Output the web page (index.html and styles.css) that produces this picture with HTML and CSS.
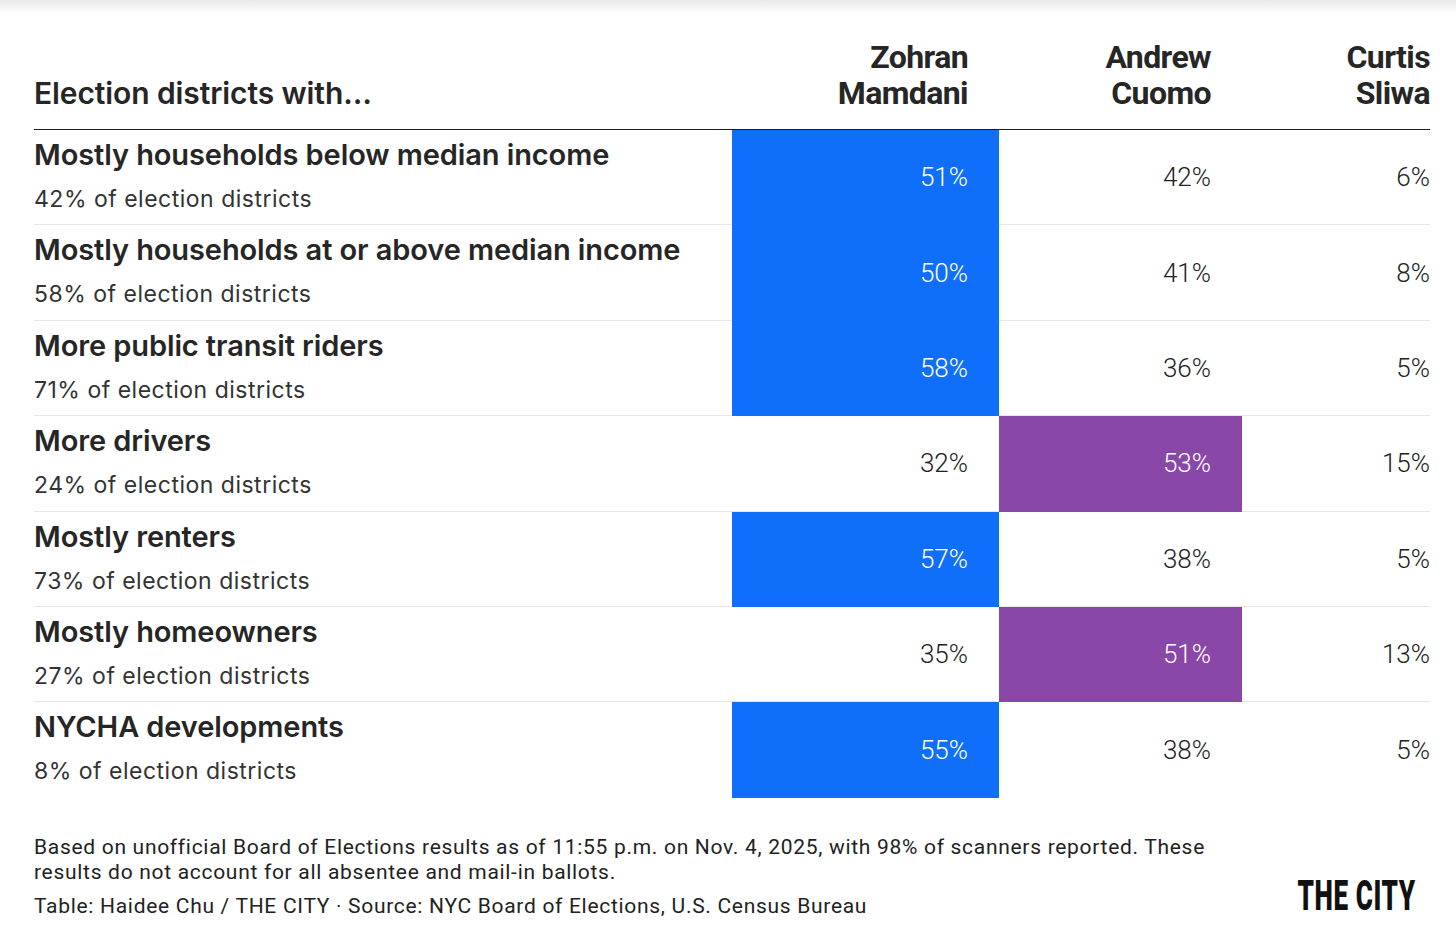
FILE: index.html
```html
<!DOCTYPE html>
<html lang="en">
<head>
<meta charset="utf-8">
<title>Election districts</title>
<link rel="stylesheet" href="styles.css">
</head>
<body>
<div class="shade"></div>
<main class="wrap">
  <div class="table">
    <div class="head">
      <div class="hcell hlabel">Election districts with…</div>
      <div class="hcell hnum pad">Zohran<br>Mamdani</div>
      <div class="hcell hnum pad">Andrew<br>Cuomo</div>
      <div class="hcell hnum">Curtis<br>Sliwa</div>
    </div>

    <div class="row">
      <div class="cell label"><div class="title">Mostly households below median income</div><div class="sub">42% of election districts</div></div>
      <div class="cell num pad blue">51%</div>
      <div class="cell num pad">42%</div>
      <div class="cell num">6%</div>
    </div>
    <div class="row">
      <div class="cell label"><div class="title">Mostly households at or above median income</div><div class="sub">58% of election districts</div></div>
      <div class="cell num pad blue">50%</div>
      <div class="cell num pad">41%</div>
      <div class="cell num">8%</div>
    </div>
    <div class="row">
      <div class="cell label"><div class="title">More public transit riders</div><div class="sub">71% of election districts</div></div>
      <div class="cell num pad blue">58%</div>
      <div class="cell num pad">36%</div>
      <div class="cell num">5%</div>
    </div>
    <div class="row">
      <div class="cell label"><div class="title">More drivers</div><div class="sub">24% of election districts</div></div>
      <div class="cell num pad">32%</div>
      <div class="cell num pad purple">53%</div>
      <div class="cell num">15%</div>
    </div>
    <div class="row">
      <div class="cell label"><div class="title">Mostly renters</div><div class="sub">73% of election districts</div></div>
      <div class="cell num pad blue">57%</div>
      <div class="cell num pad">38%</div>
      <div class="cell num">5%</div>
    </div>
    <div class="row">
      <div class="cell label"><div class="title">Mostly homeowners</div><div class="sub">27% of election districts</div></div>
      <div class="cell num pad">35%</div>
      <div class="cell num pad purple">51%</div>
      <div class="cell num">13%</div>
    </div>
    <div class="row last">
      <div class="cell label"><div class="title">NYCHA developments</div><div class="sub">8% of election districts</div></div>
      <div class="cell num pad blue">55%</div>
      <div class="cell num pad">38%</div>
      <div class="cell num">5%</div>
    </div>
  </div>

  <footer class="foot">
    <div class="notes">
      <p class="note">Based on unofficial Board of Elections results as of 11:55 p.m. on Nov. 4, 2025, with 98% of scanners reported. These results do not account for all absentee and mail-in ballots.</p>
      <p class="credit">Table: Haidee Chu / THE CITY · Source: NYC Board of Elections, U.S. Census Bureau</p>
    </div>
    <div class="logo">THE CITY</div>
  </footer>
</main>
</body>
</html>
```

FILE: styles.css
```css
html, body {
  margin: 0;
  padding: 0;
  background: #ffffff;
}
body {
  width: 1456px;
  height: 944px;
  overflow: hidden;
  position: relative;
  font-family: "Inter", "Noto Sans", sans-serif;
  color: #222222;
}
.shade {
  position: absolute;
  left: 0;
  top: 0;
  width: 100%;
  height: 14px;
  background: linear-gradient(#e9e9e9, rgba(255,255,255,0));
}
.wrap {
  padding: 0 26px 0 34px;
}
.table {
  width: 1396px;
}
.head, .row {
  display: grid;
  grid-template-columns: 698px 267px 243px 188px;
}
.head {
  height: 130px;
  border-bottom: 1.5px solid #1e1e1e;
  box-sizing: border-box;
  align-items: end;
}
.hcell {
  padding-bottom: 18px;
  line-height: 36px;
  color: #262626;
}
.hlabel {
  font-size: 30px;
  font-weight: 600;
  letter-spacing: -0.1px;
}
.hnum {
  text-align: right;
  font-family: "Roboto", "Liberation Sans", sans-serif;
  font-size: 32px;
  font-weight: 700;
  letter-spacing: -0.6px;
}
.pad {
  padding-right: 31px;
}
.row {
  height: 95.4px;
}
.cell {
  border-bottom: 1px solid #e7e7e7;
  box-sizing: border-box;
}
.row.last .cell {
  border-bottom-color: transparent;
}
.label {
  padding-top: 9px;
}
.title {
  font-size: 29px;
  line-height: 32px;
  font-weight: 600;
  color: #262626;
  letter-spacing: -0.1px;
}
.sub {
  margin-top: 15px;
  font-size: 23px;
  line-height: 26px;
  font-weight: 400;
  color: #333333;
  letter-spacing: 0.5px;
}
.num {
  display: flex;
  align-items: center;
  justify-content: flex-end;
  font-family: "Roboto", "Liberation Sans", sans-serif;
  font-weight: 300;
  font-size: 26px;
  color: #222222;
}
.blue {
  background: #0f6ffb;
  color: #ffffff;
  border-bottom-color: #0f6ffb;
}
.purple {
  background: #8947a8;
  color: #ffffff;
  border-bottom-color: #8947a8;
}
.foot {
  margin-top: 37px;
  display: flex;
  justify-content: space-between;
  align-items: flex-end;
  width: 1396px;
}
.notes {
  width: 1210px;
  font-family: "Roboto", "Liberation Sans", sans-serif;
  font-size: 21px;
  line-height: 25px;
  color: #222222;
  letter-spacing: 0.7px;
}
.note, .credit {
  margin: 0;
}
.credit {
  margin-top: 9px;
}
.logo {
  white-space: nowrap;
  font-family: "Roboto", "DejaVu Sans", sans-serif;
  font-weight: 900;
  font-size: 42px;
  line-height: 30px;
  height: 30px;
  color: #111111;
  margin-right: 14px;
  margin-bottom: 8px;
  transform: scaleX(0.62);
  transform-origin: right center;
  letter-spacing: 1px;
}
```
